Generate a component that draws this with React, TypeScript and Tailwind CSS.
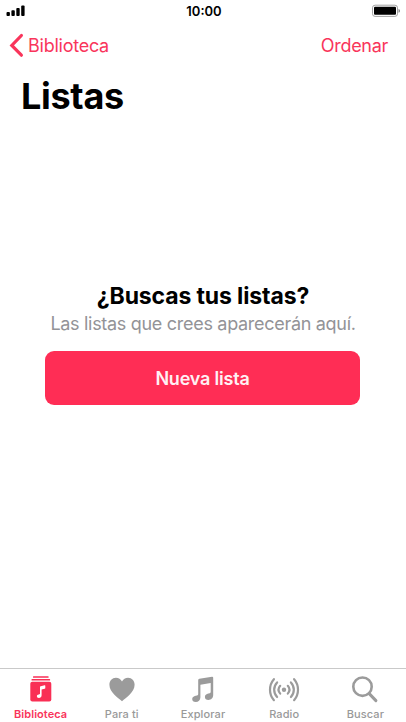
import type { ReactNode } from "react";

function Signal() {
  return (
    <svg width="20" height="12" viewBox="0 0 20 12" fill="#000">
      <rect x="0.5" y="7" width="3.4" height="4" rx="0.9" />
      <rect x="5.4" y="5.2" width="3.4" height="5.8" rx="0.9" />
      <rect x="10.3" y="3.1" width="3.4" height="7.9" rx="0.9" />
      <rect x="15.2" y="0.5" width="3.4" height="10.5" rx="0.9" />
    </svg>
  );
}

function Battery() {
  return (
    <svg width="30" height="14" viewBox="0 0 30 14">
      <rect x="0.5" y="1.200" width="25" height="11.2" rx="2.6" fill="none" stroke="#a3a3a3" strokeWidth="1" />
      <rect x="2" y="2.8" width="22" height="8" rx="1" fill="#000" />
      <path d="M26.500 4.900c2 .6 2 3.300 0 3.900z" fill="#8c8c8c" />
    </svg>
  );
}

function LibraryIcon() {
  return (
    <svg width="32" height="32" viewBox="0 0 32 32" fill="#f92f55">
      <rect x="8" y="3.200" width="15.600" height="1.500" rx="0.500" />
      <rect x="6.500" y="6" width="18.600" height="1.500" rx="0.500" />
      <rect x="5.300" y="8.800" width="21" height="19.800" rx="2" />
      <path
        d="M15 14c0-.5.200-.7.700-.8l4-.9c.4-.1.600.1.600.5v2.300c0 .4-.2.600-.6.700l-3.100.7v5.700c0 1.800-1.200 2.800-2.700 2.800-1.300 0-2-.7-2-1.700 0-1 .7-1.600 1.900-1.800.9-.2 1.200-.4 1.200-1z"
        fill="#fff"
      />
    </svg>
  );
}

function HeartIcon() {
  return (
    <svg width="32" height="32" viewBox="0 0 32 32" fill="#9b9b9b">
      <path d="M16 28.200C12 25.100 3.400 19.100 3.400 11.800c0-4.200 2.800-7.100 6.500-7.100 2.800 0 4.900 1.500 6.100 3.900 1.200-2.400 3.300-3.900 6.100-3.900 3.700 0 6.500 2.900 6.500 7.100 0 7.300-8.600 13.300-12.600 16.400z" />
    </svg>
  );
}

function NoteIcon() {
  return (
    <svg width="32" height="32" viewBox="0 0 32 32" fill="#9b9b9b">
      <path
        fillRule="evenodd"
        d="M11.200 7.200c0-.9.400-1.300 1.200-1.500L25 3.800c.8-.1 1.200.3 1.200 1v17.300c0 3.100-2.100 4.900-4.700 4.900-2.300 0-3.600-1.200-3.600-3 0-1.900 1.400-3 3.500-3.400l1.300-.3c.7-.2 1-.7 1-1.500V10l-10.300 1.800v12.500c0 3-2.100 4.800-4.600 4.800-2.400 0-3.600-1.200-3.600-3 0-1.900 1.400-3 3.500-3.400l1.300-.3c.8-.2 1.200-.7 1.200-1.500z"
      />
    </svg>
  );
}

function RadioIcon() {
  return (
    <svg width="32" height="32" viewBox="0 0 32 32" fill="none" stroke="#9b9b9b" strokeWidth="2.200" strokeLinecap="round">
      <circle cx="16" cy="16.700" r="2.200" fill="#9b9b9b" stroke="none" />
      <path d="M12.200 12.800c-2 2.300-2 5.500 0 7.800M19.800 12.800c2 2.300 2 5.500 0 7.800M9.100 9.400c-3.900 4.200-3.900 10.400 0 14.600M22.900 9.400c3.900 4.200 3.900 10.400 0 14.600M5.900 6.200c-5.200 6-5.200 15 0 21M26.100 6.200c5.200 6 5.200 15 0 21" />
    </svg>
  );
}

function SearchIcon() {
  return (
    <svg width="32" height="32" viewBox="0 0 32 32" fill="none" stroke="#9b9b9b">
      <circle cx="13.500" cy="13.700" r="9.200" strokeWidth="2.600" />
      <path d="M20.200 20.600l6.700 7" strokeWidth="3" strokeLinecap="round" />
    </svg>
  );
}

const tabs: { label: string; icon: ReactNode; active?: boolean }[] = [
  { label: "Biblioteca", icon: <LibraryIcon />, active: true },
  { label: "Para ti", icon: <HeartIcon /> },
  { label: "Explorar", icon: <NoteIcon /> },
  { label: "Radio", icon: <RadioIcon /> },
  { label: "Buscar", icon: <SearchIcon /> },
];

export default function App() {
  return (
    <div className="flex h-[722px] w-[406px] flex-col overflow-hidden bg-white font-['Inter',sans-serif] text-black">
      <header className="grid h-[22px] grid-cols-3 items-center pl-1.5 pr-1">
        <Signal />
        <span className="text-center text-[13px] font-semibold leading-[22px]">10:00</span>
        <span className="flex justify-end">
          <Battery />
        </span>
      </header>
      <nav className="flex h-[46px] items-center justify-between pl-2 pr-[18px] text-[18px] text-[#f9355b]">
        <button className="flex items-center gap-1">
          <svg width="16" height="26" viewBox="0 0 16 26" fill="none" stroke="currentColor" strokeWidth="3.200">
            <path d="M13.400 3.500L3.800 13.500l9.600 9.700" strokeLinecap="round" strokeLinejoin="miter" />
          </svg>
          <span className="tracking-[-0.25px]">Biblioteca</span>
        </button>
        <button className="tracking-[-0.3px]">Ordenar</button>
      </nav>
      <h1 className="mt-0.5 h-[52px] pl-[21px] text-[36px] font-bold leading-[53px] tracking-[-0.3px]">Listas</h1>
      <main className="flex flex-1 flex-col items-center pt-[160px]">
        <h2 className="h-7 whitespace-nowrap text-[23px] font-bold leading-7 tracking-[-0.13px]">¿Buscas tus listas?</h2>
        <p className="h-7 whitespace-nowrap text-[18px] leading-7 tracking-[-0.3px] text-[#939397]">
          Las listas que crees aparecerán aquí.
        </p>
        <button className="mr-px mt-[13px] h-[54px] w-[315px] rounded-[9px] bg-[#ff2d55] text-[18px] font-semibold tracking-[-0.2px] text-[#fff0f3]">
          Nueva lista
        </button>
      </main>
      <footer className="grid h-[54px] grid-cols-5 border-t border-[#c9c9c9]">
        {tabs.map((tab) => (
          <button
            key={tab.label}
            className={`flex flex-col items-center pt-1 text-[11px] font-medium ${tab.active ? "text-[#f9355b]" : "text-[#999]"}`}
          >
            {tab.icon}
            <span className={`mt-px leading-4 ${tab.active ? "font-semibold tracking-[0.05px]" : "tracking-[0.1px]"}`}>
              {tab.label}
            </span>
          </button>
        ))}
      </footer>
    </div>
  );
}
